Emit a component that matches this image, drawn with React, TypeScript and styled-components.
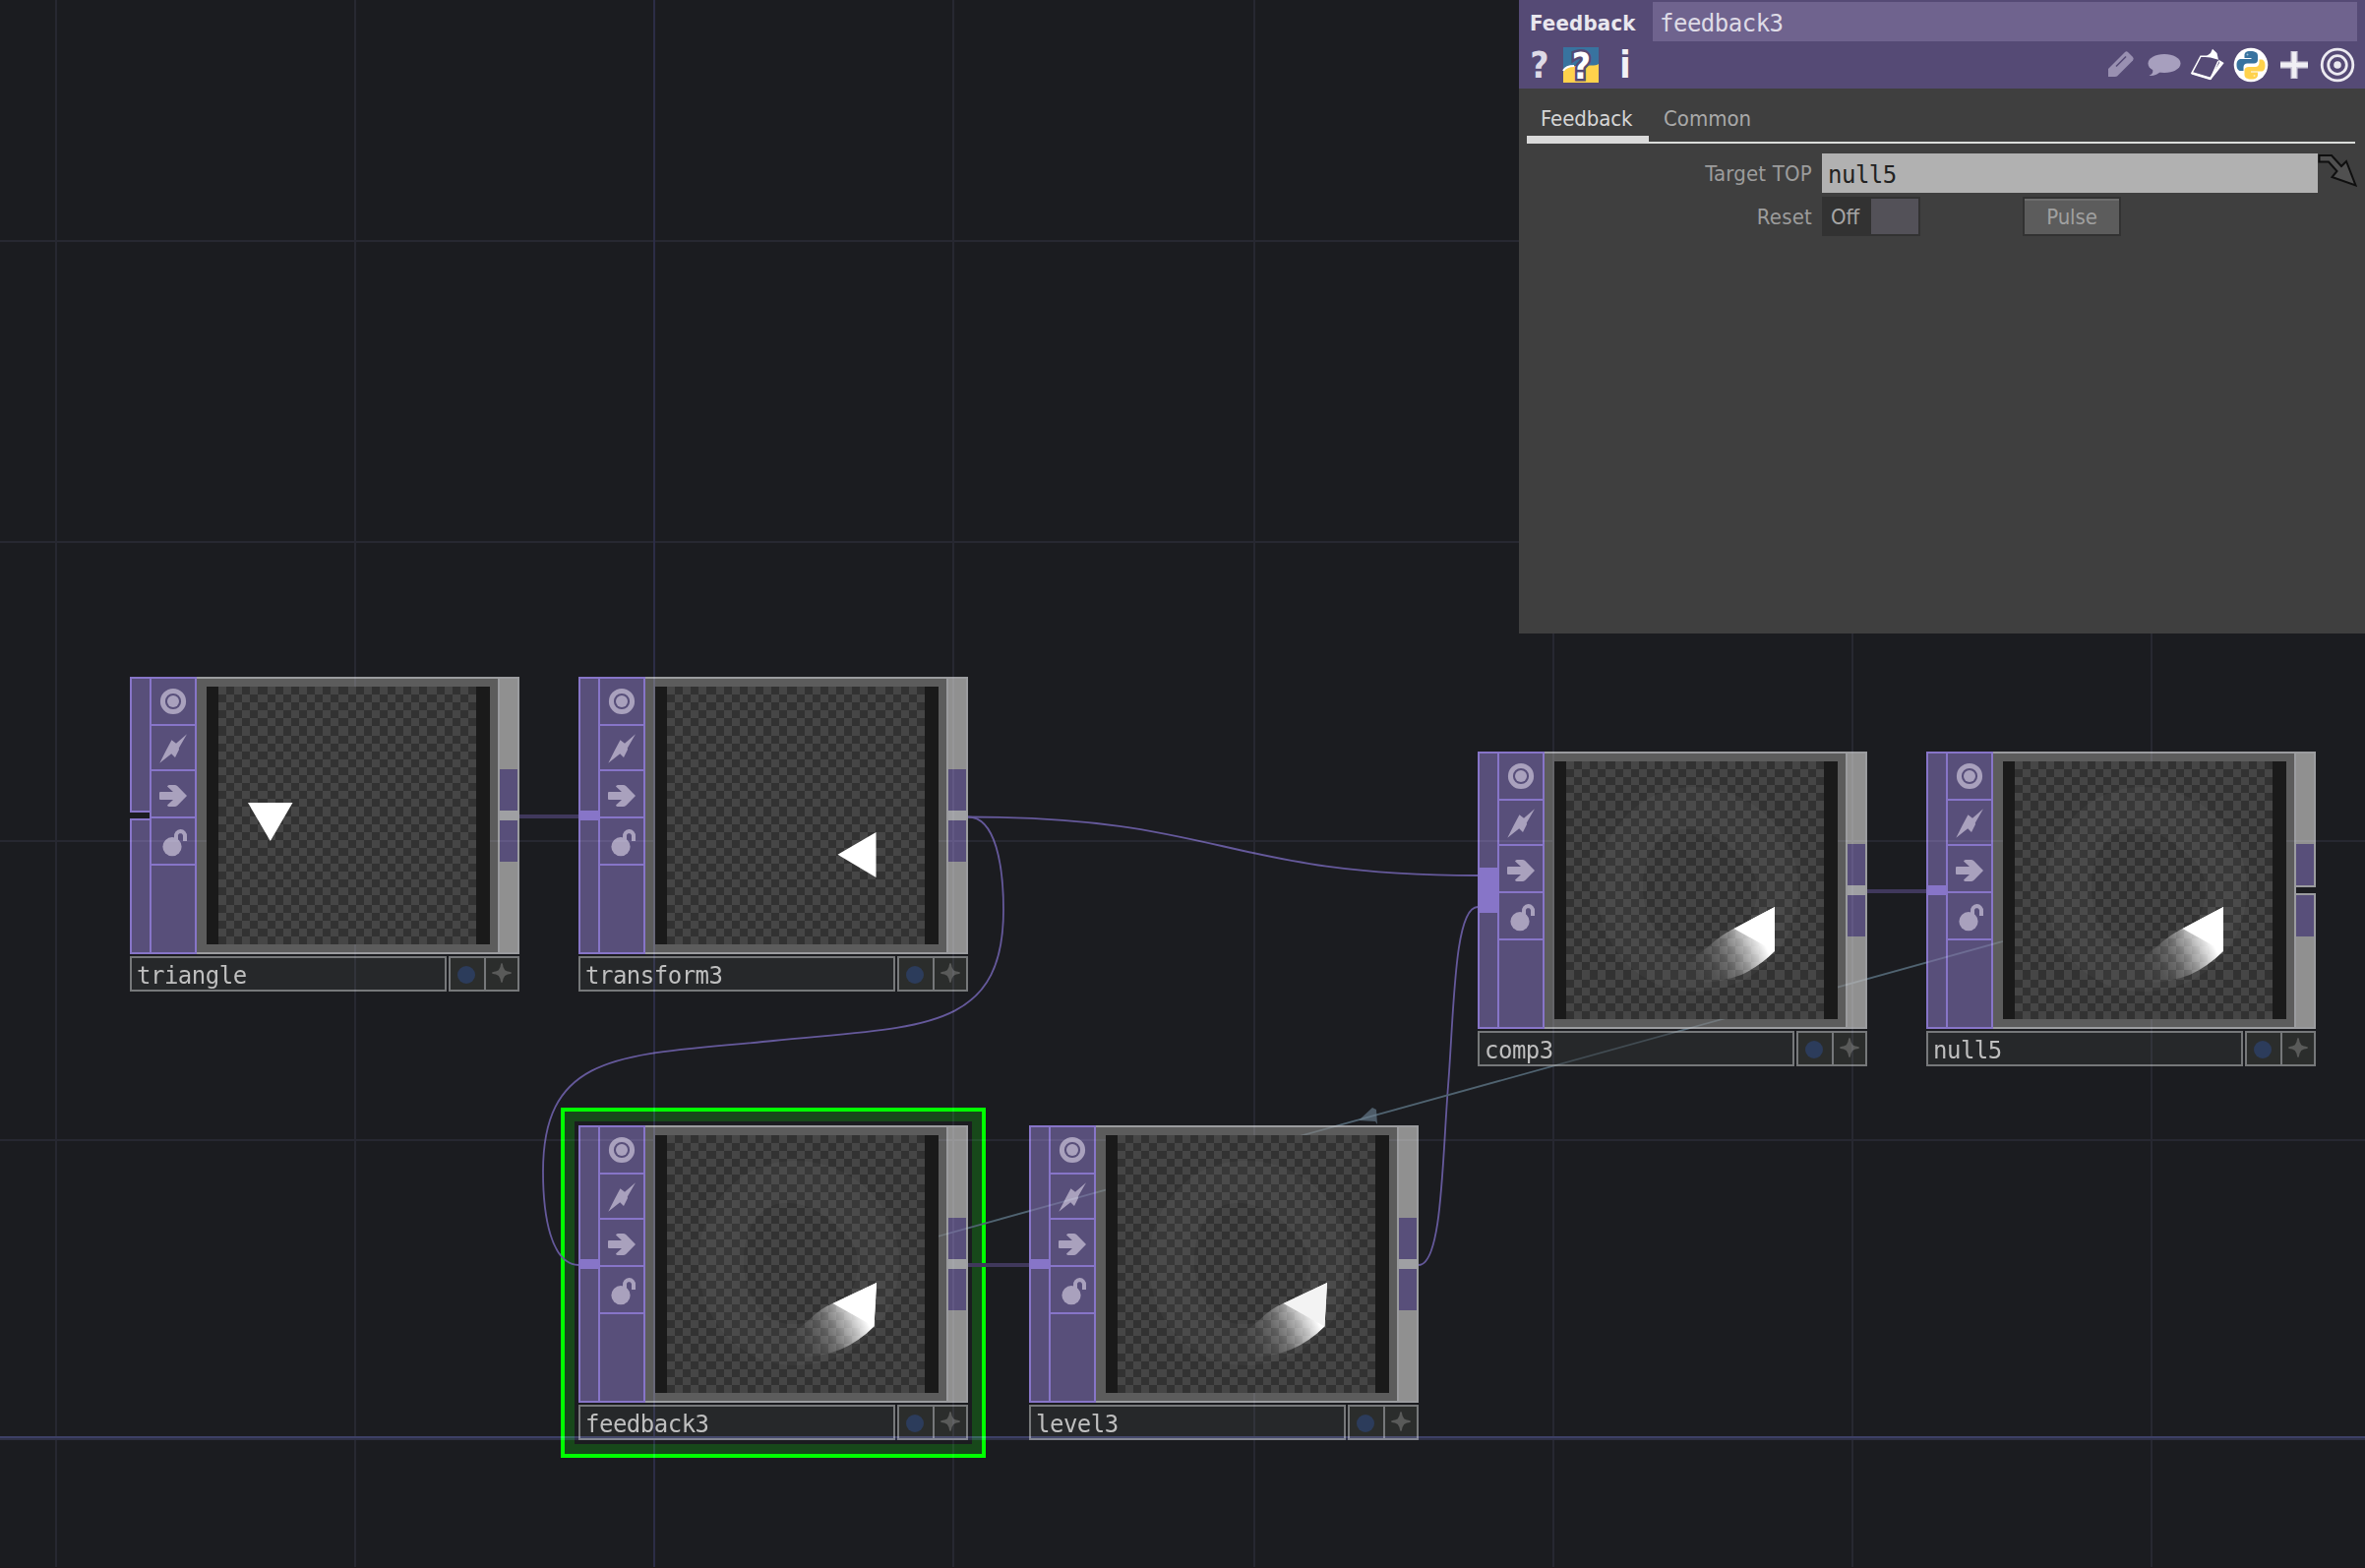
import React from "react";
import styled, { createGlobalStyle, css } from "styled-components";

const GlobalStyle = createGlobalStyle`
  *, *::before, *::after { box-sizing: border-box; }
  html, body { margin: 0; padding: 0; background: #1b1c20; overflow: hidden; }
`;

const mono = `"DejaVu Sans Mono", "Liberation Mono", monospace`;
const sans = `"DejaVu Sans Condensed", "DejaVu Sans", sans-serif`;

const purple = "#584f7a";
const purpleLine = "#8775c8";
const greyLine = "#9b9c9f";
const flagInk = "#a9a1bd";

const Network = styled.main`
  position: relative;
  width: 2404px;
  height: 1594px;
  overflow: hidden;
  background: #1b1c20;
  border-bottom: 1px solid #20191d;
`;

const Wires = styled.svg`
  position: absolute;
  inset: 0;
  fill: none;
`;

const GridOverlay = styled(Wires)`
  z-index: 2;
  mix-blend-mode: screen;
  pointer-events: none;
`;

/* ---------- node ---------- */

const NodeRoot = styled.section<{ $x: number; $y: number }>`
  position: absolute;
  left: ${(p) => p.$x}px;
  top: ${(p) => p.$y}px;
  width: 396px;
  display: flex;
  flex-direction: column;
  gap: 2px;
`;

const SelectionRing = styled.div`
  position: absolute;
  left: 570px;
  top: 1126px;
  width: 432px;
  height: 356px;
  border: 4px solid #00ff00;
  box-shadow: inset 0 0 0 10px #17481a;
`;

const NodeBody = styled.div`
  display: grid;
  grid-template-columns: 20px 48px 306px 22px;
  height: 282px;
`;

const InputColumn = styled.div`
  display: flex;
  flex-direction: column;
`;

const InputBox = styled.div<{ $end: "top" | "bottom"; $closed: boolean }>`
  flex: 1;
  background: ${purple};
  border: 0 solid ${purpleLine};
  border-left-width: 2px;
  border-${(p) => p.$end}-width: 2px;
  ${(p) => p.$closed && css`border-${p.$end === "top" ? "bottom" : "top"}-width: 2px;`}
`;

const InputPort = styled.div<{ $size: number; $open: boolean }>`
  height: ${(p) => p.$size}px;
  background: ${(p) => (p.$open ? "transparent" : purpleLine)};
`;

const FlagColumn = styled.div`
  display: flex;
  flex-direction: column;
  background: ${purple};
  border: 2px solid ${purpleLine};
`;

const FlagCell = styled.div<{ $h: number; $drop?: number }>`
  height: ${(p) => p.$h}px;
  padding-top: ${(p) => p.$drop ?? 0}px;
  border-bottom: 2px solid ${purpleLine};
  display: flex;
  align-items: center;
  justify-content: center;
  svg { display: block; overflow: visible; }
`;

const ViewerFrame = styled.div`
  background: #5c5c5c;
  border: 0 solid ${greyLine};
  border-width: 2px 0;
  padding: 8px 8px 8px 10px;
`;

const Viewer = styled.div`
  position: relative;
  z-index: 3;
  height: 262px;
  background: #1a1a1a;
  padding: 0 14px 0 12px;
  svg { display: block; }
`;

const OutputColumn = styled.div`
  display: flex;
  flex-direction: column;
  border-left: 2px solid ${greyLine};
`;

const OutputBox = styled.div<{ $end: "top" | "bottom"; $closed: boolean }>`
  flex: 1;
  display: flex;
  flex-direction: column;
  justify-content: ${(p) => (p.$end === "top" ? "flex-end" : "flex-start")};
  background: #909090;
  border: 0 solid ${greyLine};
  border-right-width: 2px;
  border-${(p) => p.$end}-width: 2px;
  ${(p) => p.$closed && css`border-${p.$end === "top" ? "bottom" : "top"}-width: 2px;`}
`;

const OutputBlock = styled.div`
  height: 42px;
  background: ${purple};
`;

const OutputPort = styled.div<{ $open: boolean }>`
  height: ${(p) => (p.$open ? 6 : 10)}px;
  background: ${(p) => (p.$open ? "transparent" : "#9fa0a3")};
`;

const NodeFooter = styled.div`
  display: grid;
  grid-template-columns: 322px 72px;
  gap: 2px;
  height: 36px;
`;

const NodeName = styled.div`
  height: 36px;
  border: 2px solid #76787a;
  background: #26282a;
  padding: 4px 0 0 5px;
  font: 24px/28px ${mono};
  letter-spacing: -0.5px;
  color: #bfbfbf;
  white-space: nowrap;
`;

const NodeToggles = styled.div`
  display: grid;
  grid-template-columns: 36px 1fr;
  height: 36px;
  border: 2px solid #76787a;
  background: #2b2d2c;
`;

const NodeToggle = styled.div<{ $divided?: boolean }>`
  display: flex;
  align-items: center;
  justify-content: center;
  border-right: ${(p) => (p.$divided ? "2px solid #76787a" : "0")};
  svg { display: block; }
`;

/* ---------- parameter panel ---------- */

const Panel = styled.aside`
  position: absolute;
  z-index: 4;
  top: 0;
  right: 0;
  width: 860px;
  height: 644px;
  background: #3f3f3f;
  display: flex;
  flex-direction: column;
`;

const PanelHeader = styled.header`
  height: 90px;
  background: #554a75;
  padding: 2px 8px 0 11px;
`;

const TitleRow = styled.div`
  display: grid;
  grid-template-columns: 125px 1fr;
  height: 40px;
  align-items: start;
`;

const OperatorType = styled.span`
  font: bold 22px/38px ${sans};
  color: #e9e7ee;
  padding-top: 3px;
  height: 40px;
  letter-spacing: 0.2px;
`;

const NameField = styled.div`
  height: 40px;
  background: #6f638e;
  padding: 4px 0 0 7px;
  font: 24px/36px ${mono};
  letter-spacing: -0.5px;
  color: #dedbe6;
`;

const ToolRow = styled.div`
  display: flex;
  justify-content: space-between;
  align-items: center;
  height: 48px;
  padding-right: 3px;
`;

const ToolGroup = styled.div<{ $gap: number }>`
  display: flex;
  align-items: center;
  gap: ${(p) => p.$gap}px;
  svg { display: block; overflow: visible; }
`;

const HelpGlyph = styled.span<{ $w: number; $color: string }>`
  width: ${(p) => p.$w}px;
  padding-top: 2px;
  text-align: center;
  font: bold 37px/46px ${sans};
  color: ${(p) => p.$color};
`;

const TabBar = styled.nav`
  display: flex;
  height: 56px;
  margin: 0 10px 0 8px;
  border-bottom: 2px solid #dadcda;
`;

const Tab = styled.div<{ $active?: boolean }>`
  height: 56px;
  padding: 17px 14px 0 ${(p) => (p.$active ? 14 : 15)}px;
  font: 22px/28px ${sans};
  letter-spacing: ${(p) => (p.$active ? -0.1 : 0)}px;
  color: ${(p) => (p.$active ? "#d6d6d6" : "#a9a9a9")};
  ${(p) => p.$active && css`width: 124px; border-bottom: 8px solid #dadada;`}
`;

const Parameters = styled.div`
  padding: 10px 8px 0 0;
  display: flex;
  flex-direction: column;
  gap: 4px;
`;

const ParameterRow = styled.div`
  display: grid;
  grid-template-columns: 298px 504px 1fr;
  column-gap: 10px;
  height: 40px;
`;

const ParameterLabel = styled.label`
  text-align: right;
  font: 22px/42px ${sans};
  height: 40px;
  letter-spacing: 0.2px;
  color: #9c9c9c;
`;

const TextField = styled.div`
  height: 40px;
  background: #b1b1b1;
  padding: 4px 0 0 6px;
  font: 24px/36px ${mono};
  letter-spacing: -0.5px;
  color: #222;
`;

const ArrowSlot = styled.div`
  margin-left: -10px;
  svg { display: block; }
`;

const ControlRow = styled.div`
  display: flex;
  gap: 104px;
`;

const Toggle = styled.div`
  width: 100px;
  height: 40px;
  background: #323232;
  display: flex;
  justify-content: space-between;
  padding: 2px;
  font: 22px/38px ${sans};
  color: #a6a6a6;
`;

const ToggleText = styled.span`
  padding-left: 7px;
`;

const ToggleKnob = styled.span`
  width: 48px;
  height: 36px;
  background: #535158;
`;

const PulseButton = styled.div`
  width: 100px;
  height: 40px;
  border: 2px solid #323232;
  background: #5c5c5c;
  box-shadow: inset 0 2px 0 #6d6d6d;
  text-align: center;
  font: 22px/38px ${sans};
  letter-spacing: -0.1px;
  color: #a0a0a0;
`;

/* ---------- drawings ---------- */

const edges = Array.from({ length: 33 }, (_, i) => Math.round((i * 131) / 32) * 2);
const checkerPath = (() => {
  let d = "";
  for (let r = 0; r < 32; r++)
    for (let c = 0; c < 32; c++)
      if ((r + c) % 2 === 0)
        d += `M${edges[c]} ${edges[r]}H${edges[c + 1]}V${edges[r + 1]}H${edges[c]}Z`;
  return d;
})();

type Picture = "triangle" | "rotated" | "trail" | "trailDim" | "comp";

const Thumbnail = ({ id, picture }: { id: string; picture: Picture }) => {
  const hasTrail = picture !== "triangle" && picture !== "rotated";
  const isComp = picture === "comp";
  return (
    <svg width="262" height="262" viewBox="0 0 262 262">
      <defs>
        <linearGradient id={`fade-${id}`} gradientUnits="userSpaceOnUse" x1="203" y1="188" x2="134" y2="223">
          <stop offset="0" stopColor="#fff" stopOpacity="1" />
          <stop offset="0.24" stopColor="#fff" stopOpacity="0.6" />
          <stop offset="0.43" stopColor="#fff" stopOpacity="0.32" />
          <stop offset="0.56" stopColor="#fff" stopOpacity="0.18" />
          <stop offset="0.77" stopColor="#fff" stopOpacity="0.05" />
          <stop offset="1" stopColor="#fff" stopOpacity="0" />
        </linearGradient>
      </defs>
      <rect width="262" height="262" fill="#323232" />
      <path d={checkerPath} fill="#464646" shapeRendering="crispEdges" />
      {picture === "triangle" && <path d="M30 118H75.5L52.8 157Z" fill="#fff" />}
      {picture === "rotated" && <path d="M173.5 170.8 212.5 148V194Z" fill="#fff" />}
      {hasTrail && (
        <>
          <path
            fillRule="evenodd"
            fill="#fff"
            fillOpacity="0.032"
            d="M130 26C190 26 236 74 236 128C236 190 190 234 130 234C74 234 32 188 32 130C32 72 74 26 130 26ZM122 69C146 69 164 84 180 98C194 112 198 132 190 152C176 180 150 193 124 192C94 190 78 158 78 128C78 94 94 69 122 69Z"
          />
          <path
            d={
              isComp
                ? "M212 148V193Q197 208 178 217Q160 224 130 226L116 206Q132 199 146 187Q158 176 170.5 170Z"
                : "M213 150L210.5 194.5Q195 210 176 218Q158 225 128 227L114 208Q130 201 144 188Q156 176 168.5 171Z"
            }
            fill={`url(#fade-${id})`}
          />
          <path
            d={isComp ? "M212 148V193L170.5 170Z" : "M213 150L210.5 194.5L168.5 171Z"}
            fill={picture === "trailDim" ? "#f3f3f3" : "#fff"}
          />
        </>
      )}
    </svg>
  );
};

const ViewFlag = () => (
  <svg width="28" height="28" viewBox="0 0 28 28">
    <circle cx="14" cy="14" r="10.6" fill="none" stroke={flagInk} strokeWidth="5" />
    <circle cx="14" cy="14" r="6" fill={flagInk} />
  </svg>
);
const CookFlag = () => (
  <svg width="28" height="30" viewBox="0 0 28 30">
    <path d="M28 .3 19.8 14.5 20 16 16 24 12.2 20.2.3 29.7 7 16.5 12.5 6.2 17 9.8Z" fill={flagInk} />
  </svg>
);
const BypassFlag = () => (
  <svg width="28" height="22" viewBox="0 0 28 22">
    <path d="M1 7H14L8 1.5Q8.5 0 10 0H15.5Q17 0 18.5 1.2L28 11 18.5 20.8Q17 22 15.5 22H10Q8.5 22 8 20.5L14 15H1Q0 15 0 14V8Q0 7 1 7Z" fill={flagInk} />
  </svg>
);
const LockFlag = () => (
  <svg width="28" height="28" viewBox="0 0 28 28">
    <circle cx="13" cy="17.7" r="9.6" fill={flagInk} />
    <path d="M17 11V7.5A4.7 4.7 0 0 1 21.5 2A4.7 4.7 0 0 1 26 7V12" fill="none" stroke={flagInk} strokeWidth="4" />
  </svg>
);

type NodeProps = {
  name: string;
  x: number;
  y: number;
  picture: Picture;
  inputOpen?: boolean;
  inputSize?: number;
  outputOpen?: boolean;
};

const OperatorNode = ({ name, x, y, picture, inputOpen = false, inputSize = 10, outputOpen = false }: NodeProps) => (
  <NodeRoot $x={x} $y={y}>
    <NodeBody>
      <InputColumn>
        <InputBox $end="top" $closed={inputOpen} />
        <InputPort $size={inputOpen ? 6 : inputSize} $open={inputOpen} />
        <InputBox $end="bottom" $closed={inputOpen} />
      </InputColumn>
      <FlagColumn>
        <FlagCell $h={48}><ViewFlag /></FlagCell>
        <FlagCell $h={46} $drop={2}><CookFlag /></FlagCell>
        <FlagCell $h={48} $drop={4}><BypassFlag /></FlagCell>
        <FlagCell $h={48} $drop={4}><LockFlag /></FlagCell>
      </FlagColumn>
      <ViewerFrame>
        <Viewer><Thumbnail id={name} picture={picture} /></Viewer>
      </ViewerFrame>
      <OutputColumn>
        <OutputBox $end="top" $closed={outputOpen}><OutputBlock /></OutputBox>
        <OutputPort $open={outputOpen} />
        <OutputBox $end="bottom" $closed={outputOpen}><OutputBlock /></OutputBox>
      </OutputColumn>
    </NodeBody>
    <NodeFooter>
      <NodeName>{name}</NodeName>
      <NodeToggles>
        <NodeToggle $divided>
          <svg width="20" height="20"><circle cx="9" cy="11" r="9" fill="#2c3c5b" /></svg>
        </NodeToggle>
        <NodeToggle>
          <svg width="20" height="22" viewBox="0 0 20 22">
            <path d="M10 0Q11 0 11.5 4L13.2 7.2 16 8.6Q20 9.2 20 10Q20 11 16 11.6L13.2 13 11.5 16Q11 20 10 20Q9 20 8.500 16L6.800 13 4 11.600Q0 11 0 10Q0 9.200 4 8.600L6.800 7.200 8.500 4Q9 0 10 0Z" fill="#595a59" />
          </svg>
        </NodeToggle>
      </NodeToggles>
    </NodeFooter>
  </NodeRoot>
);

const PythonHelp = () => (
  <svg width="36" height="36" viewBox="0 0 36 36">
    <rect width="36" height="36" fill="#38739f" />
    <path d="M0 25Q3 19 12 19L28 18.500Q34 18.500 36 17V36H0Z" fill="#ffd24c" />
    <path d="M0 24Q3 19 11 19" stroke="#fff" strokeWidth="2" fill="none" />
    <text x="18.500" y="32" textAnchor="middle" fontFamily='"DejaVu Sans Condensed", "DejaVu Sans", sans-serif' fontWeight="bold" fontSize="37" fill="#fff" stroke="#554a75" strokeWidth="5" paintOrder="stroke">?</text>
  </svg>
);

const PencilIcon = () => (
  <svg width="34" height="34" viewBox="0 0 34 34">
    <path d="M4 29V21L21 4Q22.500 2.500 24 4L29 9Q30.500 10.500 29 12.500L13 28.500 11 29Z" fill="#9990b1" />
    <path d="M12 18.500 22 8.500" stroke="#554a75" strokeWidth="1.600" />
  </svg>
);
const CommentIcon = () => (
  <svg width="34" height="34" viewBox="0 0 34 34">
    <ellipse cx="17" cy="15.500" rx="16.500" ry="9.500" fill="#a79fbe" />
    <path d="M5 20Q7 25 1.500 28Q9 28.500 14 23Z" fill="#a79fbe" />
  </svg>
);
const TagIcon = () => (
  <svg width="34" height="34" viewBox="0 0 34 34">
    <path d="M17 8.200H10L.9 25.300 20 31 28 13" fill="none" stroke="#fff" strokeWidth="1.500" />
    <path d="M18 32 20.300 32 33.700 15 28 11.500 29 15Z" fill="#fff" />
    <path d="M14.500 9 20 5 22 .8 26.500 5 28 11.700 20 9.500Z" fill="#fff" />
    <path d="M.9 25.300 20 31" stroke="#fff" strokeWidth="2.600" />
  </svg>
);
const PythonIcon = () => (
  <svg width="34" height="34" viewBox="0 0 34 34">
    <circle cx="17" cy="17" r="17.300" fill="#fff" />
    <path d="M16.500 3C11.500 3 10.500 5 10.500 7.500V10H17.500V11H7C4 11 2.500 13.500 2.500 17S4 23 6.500 23H9.500V19.500C9.500 17 11 15.500 13.500 15.500H20C22.500 15.500 24 14 24 12V7.500C24 4.500 21.500 3 16.500 3Z" fill="#38739f" />
    <path d="M17.500 31.500C22.500 31.500 24 29.500 24 27V24.500H17V23.500H27.500C30.500 23.500 31.500 21 31.500 17.500S30 11.500 27.500 11.500H25.500V14.500C25.500 17 24 19 21.500 19H15C12 19 10.500 20.500 10.500 22.500V27C10.500 30 13 31.500 17.500 31.500Z" fill="#ffd24c" />
    <circle cx="13.500" cy="6.500" r="1" fill="#9dbcd2" />
    <circle cx="20.500" cy="28" r="1" fill="#ffeab0" />
  </svg>
);
const PlusIcon = () => (
  <svg width="34" height="34" viewBox="0 0 34 34">
    <path d="M17 3V31M3 17H31" stroke="#cfcbda" strokeWidth="7" />
    <path d="M17 4V30M3 17H31" stroke="#f0eff4" strokeWidth="4" />
  </svg>
);
const TargetIcon = () => (
  <svg width="34" height="34" viewBox="0 0 34 34" fill="none" stroke="#eceaf1">
    <circle cx="17" cy="17" r="15.800" strokeWidth="2.800" />
    <circle cx="17" cy="17" r="9.300" strokeWidth="2.800" />
    <circle cx="17" cy="17" r="3.800" fill="#eceaf1" stroke="none" />
  </svg>
);

const columns = [56, 360, 968, 1274, 1578, 1882, 2186];
const rows = [244, 550, 854, 1158];

export default function App() {
  return (
    <>
      <GlobalStyle />
      <Network>
        <SelectionRing />
        <Wires width="2404" height="1594">
          <g stroke="#40385c" strokeWidth="4">
            <path d="M528 830H588M984 1286H1046M1898 906H1958" />
          </g>
          <g stroke="#65599b" strokeWidth="1.800">
            <path d="M984 830.500C1243 830.500 1243 890 1502 890" />
            <path d="M984 830.500C1012 830.500 1020 880 1020 925C1020 1050 935 1043 786 1058C637 1073 552 1066 552 1191C552 1236 560 1285 588 1286" />
            <path d="M1442 1286C1466 1286 1466 1180 1472 1104S1478 922 1502 922" />
          </g>
          <path d="M2036 957 953 1257" stroke="#37444f" strokeWidth="1.800" />
          <path d="M1381 1139 1395 1126 1399 1128 1400 1143 1398 1140Z" fill="#4d5b68" />
        </Wires>

        <OperatorNode name="triangle" x={132} y={688} picture="triangle" inputOpen />
        <OperatorNode name="transform3" x={588} y={688} picture="rotated" />
        <OperatorNode name="comp3" x={1502} y={764} picture="comp" inputSize={46} />
        <OperatorNode name="null5" x={1958} y={764} picture="comp" outputOpen />
        <OperatorNode name="feedback3" x={588} y={1144} picture="trail" />
        <OperatorNode name="level3" x={1046} y={1144} picture="trailDim" />

        <GridOverlay width="2404" height="1594">
          {columns.map((x) => <rect key={x} x={x} width="2" height="1594" fill="#0d0d13" />)}
          {rows.map((y) => <rect key={y} y={y} width="2404" height="2" fill="#0d0d13" />)}
          <rect x="664" width="2" height="1594" fill="#13132c" />
          <rect y="1460" width="2404" height="2" fill="#262850" />
          <rect y="1462" width="2404" height="2" fill="#15162b" />
          <path d="M2036 957 953 1257" stroke="#202a30" strokeWidth="1.800" />
        </GridOverlay>

        <Panel>
          <PanelHeader>
            <TitleRow>
              <OperatorType>Feedback</OperatorType>
              <NameField>feedback3</NameField>
            </TitleRow>
            <ToolRow>
              <ToolGroup $gap={14}>
                <HelpGlyph $w={20} $color="#dddae6">?</HelpGlyph>
                <PythonHelp />
                <HelpGlyph $w={26} $color="#f2f1f5">i</HelpGlyph>
              </ToolGroup>
              <ToolGroup $gap={10}>
                <PencilIcon />
                <CommentIcon />
                <TagIcon />
                <PythonIcon />
                <PlusIcon />
                <TargetIcon />
              </ToolGroup>
            </ToolRow>
          </PanelHeader>
          <TabBar>
            <Tab $active>Feedback</Tab>
            <Tab>Common</Tab>
          </TabBar>
          <Parameters>
            <ParameterRow>
              <ParameterLabel>Target TOP</ParameterLabel>
              <TextField>null5</TextField>
              <ArrowSlot>
                <svg width="40" height="40" viewBox="0 0 40 40">
                  <path d="M1.500 2H14L24 13 29 8 38.500 32.500 14.500 24 19.500 18 11 8.500H1.500Z" fill="#505050" stroke="#0f0f0f" strokeWidth="2" />
                </svg>
              </ArrowSlot>
            </ParameterRow>
            <ParameterRow>
              <ParameterLabel>Reset</ParameterLabel>
              <ControlRow>
                <Toggle>
                  <ToggleText>Off</ToggleText>
                  <ToggleKnob />
                </Toggle>
                <PulseButton>Pulse</PulseButton>
              </ControlRow>
            </ParameterRow>
          </Parameters>
        </Panel>
      </Network>
    </>
  );
}
